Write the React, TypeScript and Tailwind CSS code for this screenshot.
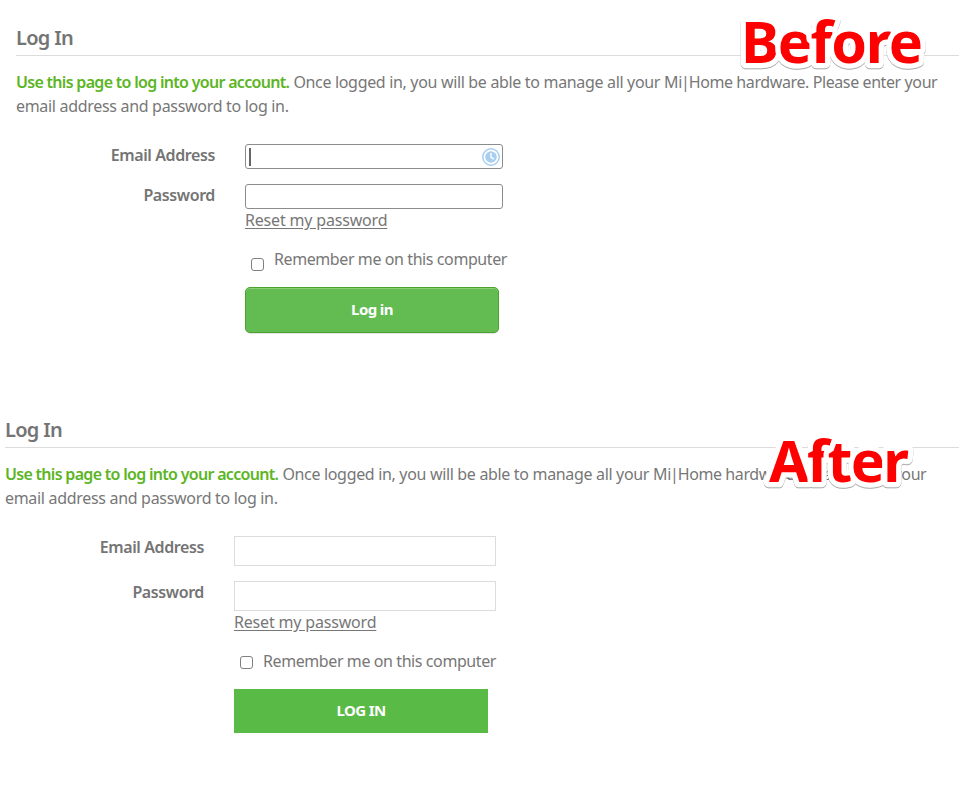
import React from "react";

function Sticker({ text, width, className }: { text: string; width: number; className: string }) {
  return (
    <svg width={width + 20} height="76" className={`absolute overflow-visible ${className}`}>
      <text
        x="6"
        y="56"
        textLength={width}
        fontSize="57.5"
        strokeWidth="10.5"
        strokeLinejoin="round"
        className="fill-[#ff0000] stroke-white font-['Noto_Sans','Open_Sans',sans-serif] font-bold [paint-order:stroke] [filter:drop-shadow(0_1px_0.7px_rgba(0,0,0,0.35))]"
      >
        {text}
      </text>
    </svg>
  );
}

function Intro() {
  return (
    <>
      <h1 className="h-9 border-b border-[#dcdcdc] text-xl leading-9 font-semibold tracking-[-0.7px] text-[#747474]">
        Log In
      </h1>
      <p className="mt-[14px] text-base leading-6 whitespace-nowrap">
        <strong className="font-semibold tracking-[-0.7px] text-[#5cb524]">Use this page to log into your account.</strong>{" "}
        <span className="tracking-[-0.33px]">Once logged in, you will be able to manage all your M</span>
        <span className="tracking-[-1.2px]">i|</span>
        <span className="tracking-[-0.4px]">Home hardware. Please enter your</span>
        <br />
        <span className="tracking-[-0.31px]">email address and password to log in.</span>
      </p>
    </>
  );
}

function ResetLink() {
  return (
    <a href="#" className="-mt-px block h-6 w-fit leading-6 tracking-[-0.18px] whitespace-nowrap underline underline-offset-2">
      Reset my password
    </a>
  );
}

function Label({ children }: { children: string }) {
  return (
    <label className="w-[199px] shrink-0 text-right leading-6 font-semibold tracking-[-0.4px] text-[#747474]">{children}</label>
  );
}

function CheckBox({ className }: { className: string }) {
  return <input type="checkbox" className={`size-[13px] shrink-0 appearance-none rounded-[3px] border border-[#808080] bg-white ${className}`} />;
}

function ClockIcon() {
  return (
    <svg width="18" height="18" viewBox="0 0 18 18" fill="none">
      <circle cx="9" cy="9" r="8.2" stroke="#a9cfee" strokeWidth="1.5" />
      <circle cx="9" cy="9" r="5.8" fill="#a9cfee" />
      <path d="M9 5v4.4l3 1.7" stroke="white" strokeWidth="1.4" />
    </svg>
  );
}

export default function App() {
  return (
    <main className="relative h-[805px] w-[959px] overflow-hidden bg-white font-['Noto_Sans','Open_Sans',sans-serif] text-base text-[#777]">
      <section className="h-[392px] pt-5 pl-4">
        <Intro />
        <div className="mt-[25px] flex h-10">
          <Label>Email Address</Label>
          <div className="mt-px ml-[30px] flex h-[25px] w-[258px] items-center justify-between rounded-[3px] border border-[#8c8c8c] pr-[2px] pl-[3px]">
            <span className="h-[18px] w-[2px] bg-[#666]" />
            <ClockIcon />
          </div>
        </div>
        <div className="flex h-16">
          <Label>Password</Label>
          <div className="mt-px ml-[30px]">
            <div className="h-[25px] w-[258px] rounded-[3px] border border-[#8c8c8c]" />
            <ResetLink />
          </div>
        </div>
        <div className="ml-[235px] flex h-10 whitespace-nowrap">
          <CheckBox className="mt-[11px]" />
          <span className="ml-[10px] leading-6 tracking-[-0.41px]">Remember me on this computer</span>
        </div>
        <button className="ml-[229px] block h-[46px] w-[254px] rounded-[5px] border border-[#4ca22c] bg-[#63bc52] pb-[2px] text-[15px] font-bold tracking-[-0.6px] text-white shadow-[inset_0_1px_0_#8bcd79,0_1px_1px_rgba(0,0,0,0.12)]">
          Log in
        </button>
      </section>
      <section className="pt-5 pl-[5px]">
        <Intro />
        <div className="mt-[25px] flex h-[45px]">
          <Label>Email Address</Label>
          <div className="mt-px ml-[30px] h-[30px] w-[262px] border border-[#dcdcdc]" />
        </div>
        <div className="flex h-[69px]">
          <Label>Password</Label>
          <div className="mt-px ml-[30px]">
            <div className="h-[30px] w-[262px] border border-[#dcdcdc]" />
            <ResetLink />
          </div>
        </div>
        <div className="ml-[235px] flex h-10 whitespace-nowrap">
          <CheckBox className="mt-[7px]" />
          <span className="ml-[10px] leading-6 tracking-[-0.41px]">Remember me on this computer</span>
        </div>
        <button className="ml-[229px] block h-[44px] w-[254px] bg-[#5aba46] pb-[2px] text-[15px] font-bold tracking-[-0.6px] text-white">
          LOG IN
        </button>
      </section>
      <Sticker text="Before" width={182} className="top-[7px] left-[735px]" />
      <Sticker text="After" width={140} className="top-[426px] left-[763px]" />
    </main>
  );
}
